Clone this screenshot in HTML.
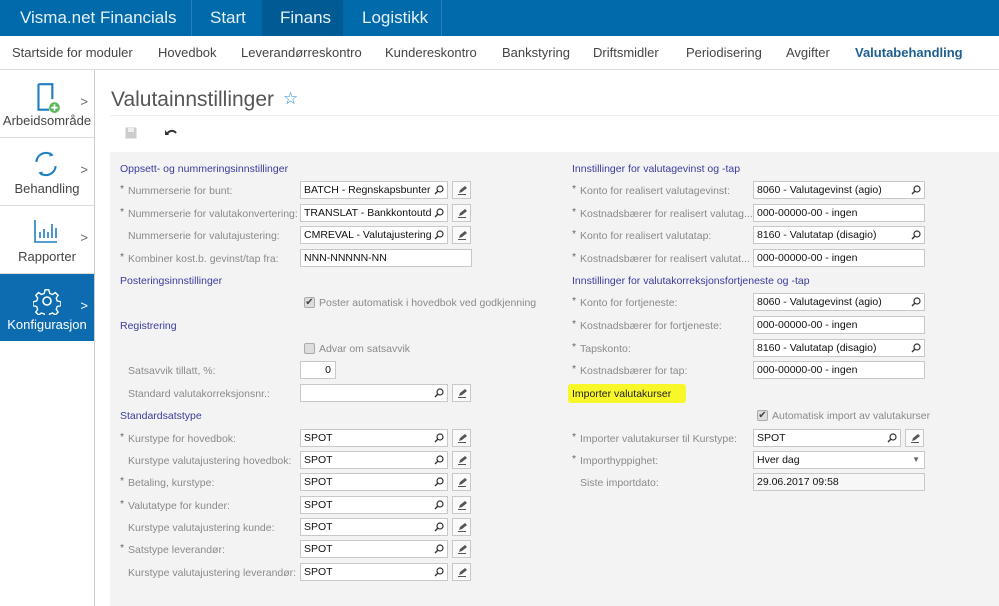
<!DOCTYPE html>
<html><head><meta charset="utf-8"><style>
*{margin:0;padding:0;box-sizing:border-box}
body{width:999px;height:606px;overflow:hidden;background:#fff;font-family:"Liberation Sans",Arial,sans-serif;position:relative}
.a{position:absolute;white-space:nowrap}
#top{left:0;top:0;width:999px;height:36px;background:#006aab}
.tt{top:0;height:36px;line-height:36px;color:#e8f1f8;font-size:17px}
#sub{left:0;top:36px;width:999px;height:34px;background:#fff;border-bottom:1px solid #ddd}
.sn{top:36px;line-height:34px;font-size:13px;color:#444}
#side{left:0;top:70px;width:95px;height:536px;border-right:1px solid #ccc;background:#fff}
.si{left:0;width:94px;height:68px;border-bottom:1px solid #ddd;text-align:center;font-size:13px;color:#444}
.si span{position:absolute;left:0;width:94px;bottom:9px;text-align:center}
.chev{position:absolute;right:6px;top:24px;font-size:13px;color:#666}
#panel{left:110px;top:152px;width:889px;height:454px;background:#f3f3f3}
.h{font-size:10.5px;color:#3b3b9e}
.l{font-size:10.5px;color:#8a8a8a}
.st{font-size:10.5px;color:#666}
.in{height:18px;background:#fff;border:1px solid #c8c8c8;font-size:10.5px;line-height:16px;padding-left:3px;color:#111;overflow:hidden}
.in svg{position:absolute;right:3px;top:3px}
.ed{width:19px;height:18px;border:1px solid #c8c8c8;background:#fafafa}
.ed svg{position:absolute;left:4px;top:3px}
.cb{width:11px;height:11px;border:1px solid #aaa;background:#ddd;border-radius:2px;font-size:10px;line-height:9px;text-align:center;color:#444}
</style></head><body>
<div class="a" id="top"></div>
<div class="a tt" style="left:20px">Visma.net Financials</div>
<div class="a" style="left:191px;top:0;width:1px;height:36px;background:#2a7fb8"></div>
<div class="a tt" style="left:210px">Start</div>
<div class="a" style="left:262px;top:0;width:81px;height:36px;background:#005a93"></div>
<div class="a tt" style="left:280px">Finans</div>
<div class="a tt" style="left:362px">Logistikk</div>
<div class="a" style="left:441px;top:0;width:1px;height:36px;background:#2a7fb8"></div>
<div class="a" id="sub"></div>
<div class="a sn" style="left:12px">Startside for moduler</div>
<div class="a sn" style="left:158px">Hovedbok</div>
<div class="a sn" style="left:241px">Leverandørreskontro</div>
<div class="a sn" style="left:385px">Kundereskontro</div>
<div class="a sn" style="left:502px">Bankstyring</div>
<div class="a sn" style="left:593px">Driftsmidler</div>
<div class="a sn" style="left:686px">Periodisering</div>
<div class="a sn" style="left:786px">Avgifter</div>
<div class="a sn" style="left:855px;color:#1d5f93;font-weight:bold">Valutabehandling</div>

<div class="a" id="side"></div>
<div class="a si" style="top:70px"><svg class="a" style="left:32px;top:12px" width="30" height="32" viewBox="0 0 28 30"><path d="M6 2h13v14M6 2v24h10" fill="none" stroke="#1f7fc0" stroke-width="2"/><circle cx="21" cy="24" r="5" fill="#5cb85c"/><path d="M21 21v6M18 24h6" stroke="#fff" stroke-width="1.6"/></svg><span>Arbeidsområde</span><div class="chev">&gt;</div></div>
<div class="a si" style="top:138px"><svg class="a" style="left:31px;top:11px" width="30" height="30" viewBox="0 0 28 28"><path d="M5 12a9 9 0 0 1 15-6M23 16a9 9 0 0 1-15 6" fill="none" stroke="#1f7fc0" stroke-width="2"/><path d="M18 3l3 3-4 1zM10 25l-3-3 4-1z" fill="#1f7fc0"/></svg><span>Behandling</span><div class="chev">&gt;</div></div>
<div class="a si" style="top:206px"><svg class="a" style="left:33px;top:12px" width="26" height="26" viewBox="0 0 26 26"><path d="M2 2v22h22" fill="none" stroke="#1f7fc0" stroke-width="1.6"/><path d="M7 20v-6M11 20v-9M15 20v-6M19 20v-14M23 20v-10" stroke="#1f7fc0" stroke-width="1.6"/></svg><span>Rapporter</span><div class="chev">&gt;</div></div>
<div class="a si" style="top:274px;height:67px;background:#0d6cb0;color:#fff;border:0"><svg class="a" style="left:33px;top:13px" width="28" height="28" viewBox="0 0 28 28"><circle cx="14" cy="14" r="4" fill="none" stroke="#fff" stroke-width="1.6"/><path d="M12 2h4l1 4 3 1 3-2 3 3-2 3 1 3 4 1v4l-4 1-1 3 2 3-3 3-3-2-3 1-1 4h-4l-1-4-3-1-3 2-3-3 2-3-1-3-4-1v-4l4-1 1-3-2-3 3-3 3 2 3-1z" fill="none" stroke="#fff" stroke-width="1.5" transform="scale(.93) translate(1 1)"/></svg><span style="color:#fff">Konfigurasjon</span><div class="chev" style="color:#fff">&gt;</div></div>

<div class="a" style="left:111px;top:88px;font-size:21px;color:#555">Valutainnstillinger</div>
<div class="a" style="left:283px;top:89px;font-size:17px;color:#2a8ad0">☆</div>
<div class="a" style="left:110px;top:115px;width:889px;height:1px;background:#eee"></div>
<svg class="a" style="left:125px;top:127px" width="12" height="12"><rect x="0.5" y="0.5" width="11" height="11" fill="#ccc"/><rect x="3" y="1" width="6" height="4" fill="#eee"/></svg>
<svg class="a" style="left:165px;top:128px" width="13" height="9"><path d="M2 7a5 5 0 0 1 9-2" fill="none" stroke="#333" stroke-width="2"/><path d="M0 2l4 5H0z" fill="#333"/></svg>

<div class="a" id="panel"></div>
<div id="f"></div>
<svg width="0" height="0" style="position:absolute"><defs>
<symbol id="mg" viewBox="0 0 10 10"><circle cx="6" cy="4" r="3" fill="none" stroke="#333" stroke-width="1.2"/><path d="M4 6L1 9" stroke="#333" stroke-width="1.4"/></symbol>
<symbol id="pn" viewBox="0 0 10 10"><path d="M2 8l1-3 5-4 2 2-5 4z" fill="#555"/><path d="M1 9.5h8" stroke="#555"/></symbol>
</defs></svg>
<script>
var f=document.getElementById('f'),h='';
function T(x,y,c,t,s){h+='<div class="a '+c+'" style="left:'+x+'px;top:'+(y-5)+'px;'+(s||'')+'">'+t+'</div>';}
function I(x,y,w,t,mg,s){h+='<div class="a in" style="left:'+x+'px;top:'+(y-9)+'px;width:'+w+'px;'+(s||'')+'">'+t+(mg?'<svg width="10" height="10"><use href="#mg"/></svg>':'')+'</div>';}
function E(x,y){h+='<div class="a ed" style="left:'+x+'px;top:'+(y-9)+'px"><svg width="10" height="10"><use href="#pn"/></svg></div>';}
function L(x,y,t,req){if(req)T(x,y-2,'st','*');T(x+8,y,'l',t);}
function CB(x,y,t,c){h+='<div class="a cb" style="left:'+x+'px;top:'+(y-5)+'px">'+(c?'✔':'')+'</div>';T(x+15,y,'l',t);}
T(120,168,'h','Oppsett- og nummeringsinnstillinger');
[[190,'Nummerserie for bunt:',1,'BATCH - Regnskapsbunter'],[213,'Nummerserie for valutakonvertering:',1,'TRANSLAT - Bankkontoutd'],[235,'Nummerserie for valutajustering:',0,'CMREVAL - Valutajustering']].forEach(function(r){L(120,r[0],r[1],r[2]);I(300,r[0],148,r[3],1);E(452,r[0]);});
L(120,258,'Kombiner kost.b. gevinst/tap fra:',1);I(300,258,172,'NNN-NNNNN-NN');
T(120,280,'h','Posteringsinnstillinger');
CB(304,302,'Poster automatisk i hovedbok ved godkjenning',1);
T(120,325,'h','Registrering');
CB(304,348,'Advar om satsavvik',0);
L(120,370,'Satsavvik tillatt, %:',0);I(300,370,36,'0',0,'text-align:right;padding-right:4px');
L(120,393,'Standard valutakorreksjonsnr.:',0);I(300,393,148,'',1);E(452,393);
T(120,415,'h','Standardsatstype');
[[438,'Kurstype for hovedbok:',1],[460,'Kurstype valutajustering hovedbok:',0],[482,'Betaling, kurstype:',1],[505,'Valutatype for kunder:',1],[527,'Kurstype valutajustering kunde:',0],[549,'Satstype leverandør:',1],[572,'Kurstype valutajustering leverandør:',0]].forEach(function(r){L(120,r[0],r[1],r[2]);I(300,r[0],148,'SPOT',1);E(452,r[0]);});
T(572,168,'h','Innstillinger for valutagevinst og -tap');
[[190,'Konto for realisert valutagevinst:','8060 - Valutagevinst (agio)',1],[213,'Kostnadsbærer for realisert valutag...','000-00000-00 - ingen',0],[235,'Konto for realisert valutatap:','8160 - Valutatap (disagio)',1],[258,'Kostnadsbærer for realisert valutat...','000-00000-00 - ingen',0]].forEach(function(r){L(572,r[0],r[1],1);I(753,r[0],172,r[2],r[3]);});
T(572,280,'h','Innstillinger for valutakorreksjonsfortjeneste og -tap');
[[302,'Konto for fortjeneste:','8060 - Valutagevinst (agio)',1],[325,'Kostnadsbærer for fortjeneste:','000-00000-00 - ingen',0],[348,'Tapskonto:','8160 - Valutatap (disagio)',1],[370,'Kostnadsbærer for tap:','000-00000-00 - ingen',0]].forEach(function(r){L(572,r[0],r[1],1);I(753,r[0],172,r[2],r[3]);});
h+='<div class="a" style="left:568px;top:384px;width:118px;height:19px;background:#f7f72a;border-radius:3px"></div>';
T(572,393,'h','Importer valutakurser','color:#222');
CB(757,415,'Automatisk import av valutakurser',1);
L(572,438,'Importer valutakurser til Kurstype:',1);I(753,438,148,'SPOT',1);E(905,438);
L(572,460,'Importhyppighet:',1);I(753,460,172,'Hver dag<span style="position:absolute;right:4px;top:0;font-size:8px;color:#666">▼</span>');
L(572,482,'Siste importdato:',0);I(753,482,172,'29.06.2017 09:58',0,'background:#f7f7f7');
f.innerHTML=h;
</script>
</body></html>
